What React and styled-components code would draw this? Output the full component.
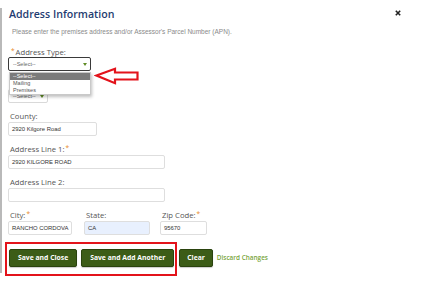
import React from "react";
import styled, { createGlobalStyle } from "styled-components";

const Global = createGlobalStyle`
  html, body { margin: 0; padding: 0; background: #fff; }
  body { width: 425px; height: 286px; overflow: hidden; font-family: "Open Sans", "Liberation Sans", sans-serif; }
  * { box-sizing: border-box; }
`;

const Page = styled.div`
  width: 425px;
  height: 286px;
  overflow: hidden;
  background: #fff;
  padding-top: 8px;
`;

const Frame = styled.div`
  height: 265px;
  border-left: 2px solid #b9b9b9;
  display: flex;
  flex-direction: column;
  padding-left: 6px;
`;

const Header = styled.div`
  display: flex;
  justify-content: space-between;
  align-items: flex-start;
  margin-top: -1.5px;
  padding-left: 1px;
  padding-right: 24px;
`;

const Title = styled.h1`
  margin: 0;
  font-family: "Open Sans", sans-serif;
  font-size: 10.6px;
  line-height: 15px;
  font-weight: 600;
  color: #1f3c71;
`;

const Close = styled.svg`
  margin-top: 3px;
  width: 6px;
  height: 6px;
`;

const Subtitle = styled.p`
  margin: 6.4px 0 0 4px;
  font-family: "Liberation Sans", Arial, sans-serif;
  font-size: 6.5px;
  line-height: 8px;
  color: #8a8a8a;
`;

const Label = styled.label`
  display: block;
  padding-left: 2px;
  font-size: 7.7px;
  line-height: 10px;
  height: 10px;
  color: #555;
  margin-bottom: ${(p) => p.$mb ?? 1}px;
  white-space: nowrap;
`;

const Star = styled.span`
  color: #e8892b;
  font-size: 6.5px;
  line-height: 0;
  vertical-align: 2px;
  margin: 0 1px;
`;

const Block = styled.div`
  margin-top: ${(p) => p.$mt ?? 0}px;
  position: relative;
`;

const SelectBox = styled.div`
  height: ${(p) => p.$h ?? 14}px;
  width: ${(p) => p.$w}px;
  border: ${(p) => (p.$focus ? "1.5px solid #3a3a3a" : "1px solid #d9d9d9")};
  border-radius: 2px;
  display: flex;
  align-items: center;
  justify-content: space-between;
  padding: 0 3px 0 4px;
  font-family: "Liberation Sans", Arial, sans-serif;
  font-size: 5.5px;
  color: #666;
  background: #fff;
`;

const Arrow = styled.svg`
  width: 4px;
  height: 3px;
`;

const Dropdown = styled.ul`
  position: absolute;
  left: 1px;
  top: 25.5px;
  width: 82px;
  margin: 0;
  padding: 0;
  list-style: none;
  background: #fff;
  border: 1px solid #c9c9c9;
  box-shadow: 1px 2px 3px rgba(0, 0, 0, 0.25);
  z-index: 5;
`;

const Option = styled.li`
  height: 7px;
  line-height: 7px;
  padding-left: 3px;
  font-family: "Liberation Sans", Arial, sans-serif;
  font-size: 5.5px;
  color: ${(p) => (p.$active ? "#fff" : "#555")};
  background: ${(p) => (p.$active ? "#7b7b7b" : "transparent")};
`;

const Pointer = styled.svg`
  position: absolute;
  left: 86px;
  top: 20px;
  width: 46px;
  height: 18px;
  z-index: 6;
`;

const Input = styled.div`
  height: 14px;
  width: ${(p) => p.$w}px;
  border: 1px solid #dedede;
  border-radius: 2px;
  background: ${(p) => (p.$filled ? "#e8f0fe" : "#fff")};
  display: flex;
  align-items: center;
  padding-left: 3px;
  font-family: "Liberation Sans", Arial, sans-serif;
  font-size: 5.9px;
  color: #333;
  white-space: nowrap;
`;

const Row = styled.div`
  display: flex;
  align-items: flex-start;
  margin-top: ${(p) => p.$mt ?? 0}px;
`;

const Col = styled.div`
  margin-left: ${(p) => p.$ml ?? 0}px;
`;

const Buttons = styled.div`
  position: relative;
  display: flex;
  align-items: center;
  margin-top: 14.2px;
  padding-left: 1px;
`;

const Button = styled.button`
  height: 18px;
  padding: 0 ${(p) => p.$px ?? 8}px;
  margin-right: ${(p) => p.$mr ?? 4}px;
  background: #3c5c17;
  border: 1px solid #2a430e;
  border-radius: 2px;
  color: #fff;
  font-family: "Open Sans", sans-serif;
  font-weight: 700;
  font-size: 6.8px;
  white-space: nowrap;
  box-shadow: 0 1px 1px rgba(0, 0, 0, 0.2);
`;

const LinkText = styled.a`
  font-family: "Open Sans", sans-serif;
  font-size: 6.4px;
  font-weight: 600;
  color: #79a53b;
  text-decoration: none;
`;

const Highlight = styled.div`
  position: absolute;
  left: -3px;
  top: -7px;
  width: 172px;
  height: 34px;
  border: 2px solid #e3131b;
  pointer-events: none;
`;

const DownArrow = () => (
  <Arrow viewBox="0 0 4 3">
    <path d="M0 0 L4 0 L2 3 Z" fill="#5f8b25" />
  </Arrow>
);

export default function App() {
  return (
    <>
      <Global />
      <Page>
        <Frame>
          <Header>
            <Title>Address Information</Title>
            <Close viewBox="0 0 6 6">
              <path d="M0.8 0.8 L5.2 5.2 M5.2 0.8 L0.8 5.2" stroke="#222" strokeWidth="1.6" />
            </Close>
          </Header>
          <Subtitle>Please enter the premises address and/or Assessor's Parcel Number (APN).</Subtitle>

          <Block $mt={11.1}>
            <Label $mb={0}>
              <Star>*</Star>Address Type:
            </Label>
            <SelectBox $focus $w={83} $h={14.3}>
              <span>--Select--</span>
              <DownArrow />
            </SelectBox>
            <Dropdown>
              <Option $active>--Select--</Option>
              <Option>Mailing</Option>
              <Option>Premises</Option>
            </Dropdown>
            <Pointer viewBox="0 0 46 18">
              <path
                d="M2.5 8.5 L21 1.8 L21 5.5 L43.5 5.5 L43.5 12.5 L21 12.5 L21 16.2 Z"
                fill="#fff"
                stroke="#e3131b"
                strokeWidth="2.2"
                strokeLinejoin="miter"
              />
            </Pointer>
          </Block>

          <Block $mt={18.2}>
            <SelectBox $w={40}>
              <span>--Select--</span>
              <DownArrow />
            </SelectBox>
          </Block>

          <Block $mt={7.3}>
            <Label>County:</Label>
            <Input $w={89}>2920 Kilgore Road</Input>
          </Block>

          <Block $mt={8}>
            <Label>
              Address Line 1:<Star>*</Star>
            </Label>
            <Input $w={157}>2920 KILGORE ROAD</Input>
          </Block>

          <Block $mt={8}>
            <Label>Address Line 2:</Label>
            <Input $w={157} />
          </Block>

          <Row $mt={8}>
            <Col>
              <Label>
                City:<Star>*</Star>
              </Label>
              <Input $w={64}>RANCHO CORDOVA</Input>
            </Col>
            <Col $ml={12}>
              <Label>State:</Label>
              <Input $w={66} $filled>CA</Input>
            </Col>
            <Col $ml={10}>
              <Label>
                Zip Code:<Star>*</Star>
              </Label>
              <Input $w={47}>95670</Input>
            </Col>
          </Row>

          <Buttons>
            <Button>Save and Close</Button>
            <Button $mr={5}>Save and Add Another</Button>
            <Button $px={7}>Clear</Button>
            <LinkText href="#">Discard Changes</LinkText>
            <Highlight />
          </Buttons>
        </Frame>
      </Page>
    </>
  );
}
